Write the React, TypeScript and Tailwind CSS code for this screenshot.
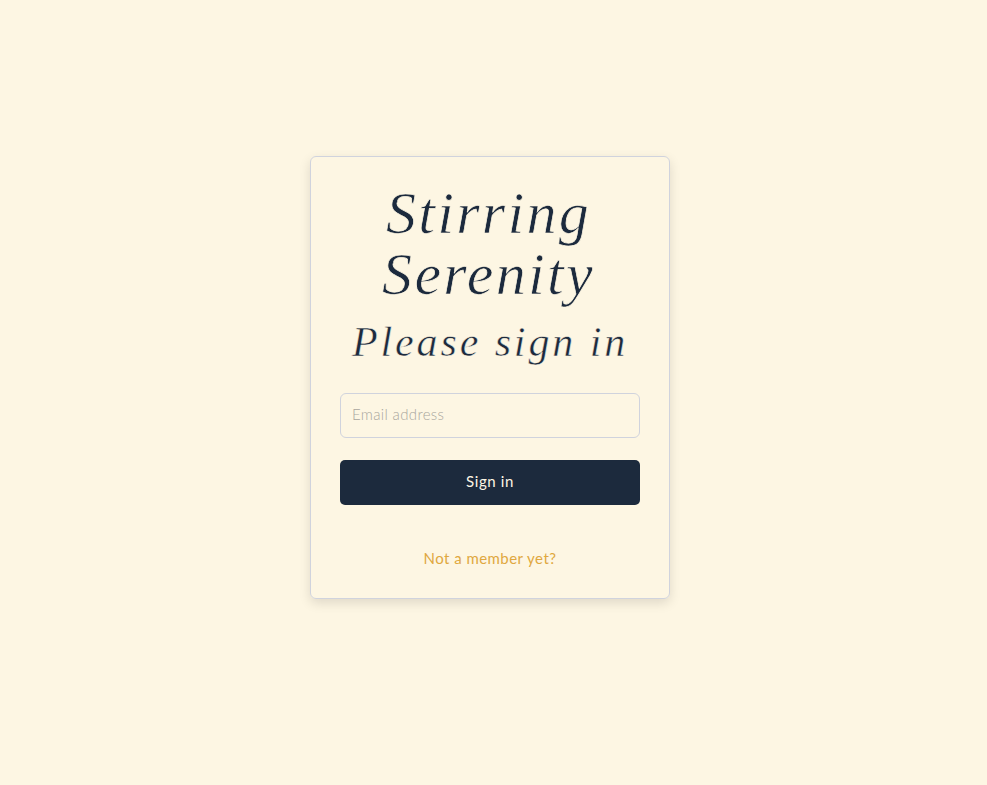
export default function App() {
  return (
    <main className="flex h-[785px] w-full justify-center bg-[#fdf6e3] pt-[156px] pr-[7px] font-['Lato','Open_Sans',sans-serif] text-[15px] text-[#1c2a3d]">
      <div className="flex h-[443px] w-[360px] shrink-0 flex-col items-center rounded-md border border-[#d0d3dd] px-[29px] pt-[26px] shadow-[0_4px_12px_rgba(0,0,0,0.12)]">
        <h1 className="pr-[3px] text-center font-['Liberation_Serif',serif] text-[60px] leading-[61px] tracking-[2.3px] italic [-webkit-text-stroke:0.7px_#fdf6e3]">
          <span className="block">Stirring</span>
          <span className="block">Serenity</span>
        </h1>
        <h2 className="mt-[12px] text-center font-['Liberation_Serif',serif] text-[42px] leading-[50px] tracking-[2.9px] whitespace-nowrap italic [-webkit-text-stroke:0.5px_#fdf6e3]">
          Please sign in
        </h2>
        <form className="mt-[26px] flex w-full flex-col gap-[22px]" onSubmit={(e) => e.preventDefault()}>
          <input
            type="email"
            placeholder="Email address"
            className="h-[45px] w-full rounded-md border border-[#d0d3dd] bg-transparent px-[11px] pb-[3px] font-light tracking-[0.35px] outline-none placeholder:text-[#a9a69e]"
          />
          <button className="h-[45px] w-full rounded-[5px] bg-[#1c2a3d] pb-[3px] tracking-[0.6px] text-[#fdf6e3]">
            Sign in
          </button>
        </form>
        <a href="#" className="mt-[42px] leading-[22px] tracking-[0.45px] text-[#e0a83f]">
          Not a member yet?
        </a>
      </div>
    </main>
  );
}
